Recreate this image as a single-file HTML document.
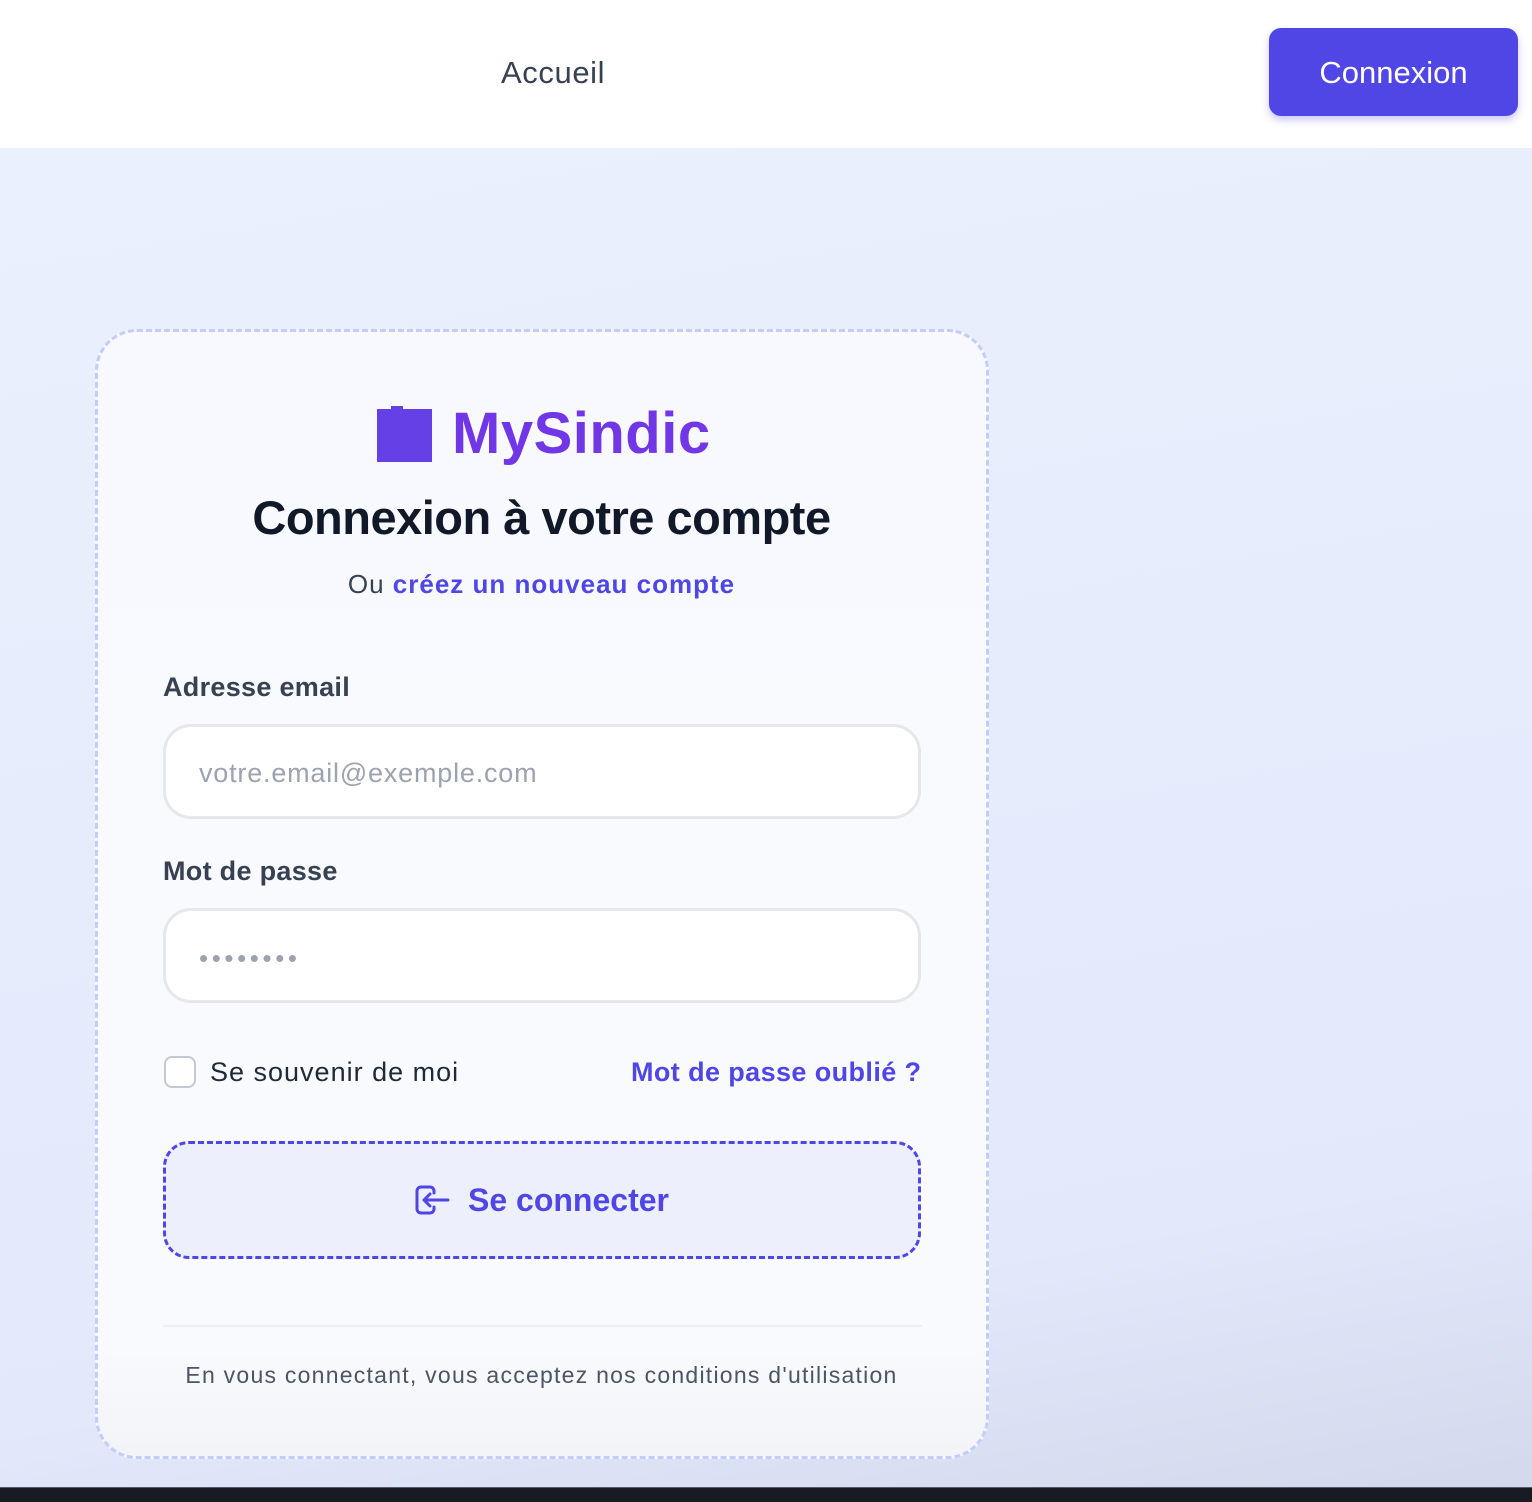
<!DOCTYPE html>
<html><head><meta charset="utf-8"><style>
*{box-sizing:border-box;margin:0;padding:0}
body{width:1532px;height:1502px;overflow:hidden;font-family:"Liberation Sans",sans-serif;background:#fff;position:relative}
.nav{position:absolute;left:0;top:0;width:1532px;height:148px;background:#fff}
.acc{position:absolute;left:501px;top:55px;font-size:31px;color:#374151;letter-spacing:.6px}
.btn{position:absolute;left:1269px;top:28px;width:249px;height:88px;background:#4f46e5;border-radius:12px;color:#fff;font-size:31px;text-align:center;line-height:90px;box-shadow:0 4px 8px rgba(79,70,229,.3)}
.main{position:absolute;left:0;top:148px;width:1532px;height:1339px;background:linear-gradient(170deg,#eaf0fd 0%,#e3e9fb 80%,#d2d9ec 100%)}
.bar{position:absolute;left:0;top:1487px;width:1532px;height:15px;background:#181b24;border-top:1px solid #555b6a}
.card{position:absolute;left:95px;top:329px;width:894px;height:1130px;border:3px dashed #c3cdfa;border-radius:42px;background:linear-gradient(#f8f9fe,#f9fafd 90%,#f3f4f8)}
.abs{position:absolute}
.logo{left:376px;top:405px;width:57px;height:57px}
.brand{left:452px;top:400px;font-size:58px;font-weight:bold;color:#7137e6;letter-spacing:.5px}
.h{left:0;width:1083px;text-align:center;top:490px;font-size:47px;font-weight:bold;color:#111827;letter-spacing:-.5px}
.sub{left:0;width:1083px;text-align:center;top:569px;font-size:26px;color:#374151;letter-spacing:1px}
.sub b{color:#4f46e5}
.lbl{left:163px;font-size:27px;font-weight:bold;color:#374151;letter-spacing:.3px}
.inp{left:163px;width:758px;height:95px;border:3px solid #e5e7eb;border-radius:28px;background:#fff}
.ph{left:199px;top:758px;font-size:27px;color:#9ca3af;letter-spacing:.8px}
.dots{left:199px;top:943px;font-size:26px;color:#9ca3af;letter-spacing:3.6px}
.cb{left:164px;top:1056px;width:32px;height:32px;border:2px solid #c4c8d0;border-radius:8px;background:#fff}
.sv{left:210px;top:1057px;font-size:27px;color:#1f2937;letter-spacing:1px}
.fg{left:631px;top:1057px;font-size:27px;font-weight:bold;color:#4f46e5;letter-spacing:.4px}
.go{left:163px;top:1141px;width:758px;height:118px;border:3px dashed #4f46e5;border-radius:26px;background:#eeeffd}
.gt{left:468px;top:1182px;font-size:32px;font-weight:bold;color:#4f46e5}
.hr{left:163px;top:1325px;width:759px;height:2px;background:#eceef3}
.ft{left:0;width:1083px;text-align:center;top:1362px;font-size:23px;color:#4b5563;letter-spacing:1.25px}
</style></head><body>
<div class="nav"><div class="acc">Accueil</div><div class="btn">Connexion</div></div>
<div class="main"></div>
<div class="bar"></div>
<div class="card"></div>
<svg class="abs logo" viewBox="0 0 57 57"><path d="M1 4h14V1h12v3h29v53H1z" fill="#6440e6"/></svg>
<div class="abs brand">MySindic</div>
<div class="abs h">Connexion à votre compte</div>
<div class="abs sub">Ou <b>créez un nouveau compte</b></div>
<div class="abs lbl" style="top:672px">Adresse email</div>
<div class="abs inp" style="top:724px"></div>
<div class="abs ph">votre.email@exemple.com</div>
<div class="abs lbl" style="top:856px">Mot de passe</div>
<div class="abs inp" style="top:908px"></div>
<div class="abs dots">••••••••</div>
<div class="abs cb"></div>
<div class="abs sv">Se souvenir de moi</div>
<div class="abs fg">Mot de passe oublié ?</div>
<div class="abs go"></div>
<svg class="abs" style="left:414px;top:1184px" width="36" height="32" viewBox="0 0 36 32" fill="none" stroke="#4f46e5" stroke-width="3" stroke-linecap="round" stroke-linejoin="round"><path d="M16 3H7a4 4 0 0 0-4 4v18a4 4 0 0 0 4 4h9a4 4 0 0 0 4-4v-2M20 9V7a4 4 0 0 0-4-4"/><path d="M34 16H10M16 10l-6 6 6 6"/></svg>
<div class="abs gt">Se connecter</div>
<div class="abs hr"></div>
<div class="abs ft">En vous connectant, vous acceptez nos conditions d'utilisation</div>
</body></html>
